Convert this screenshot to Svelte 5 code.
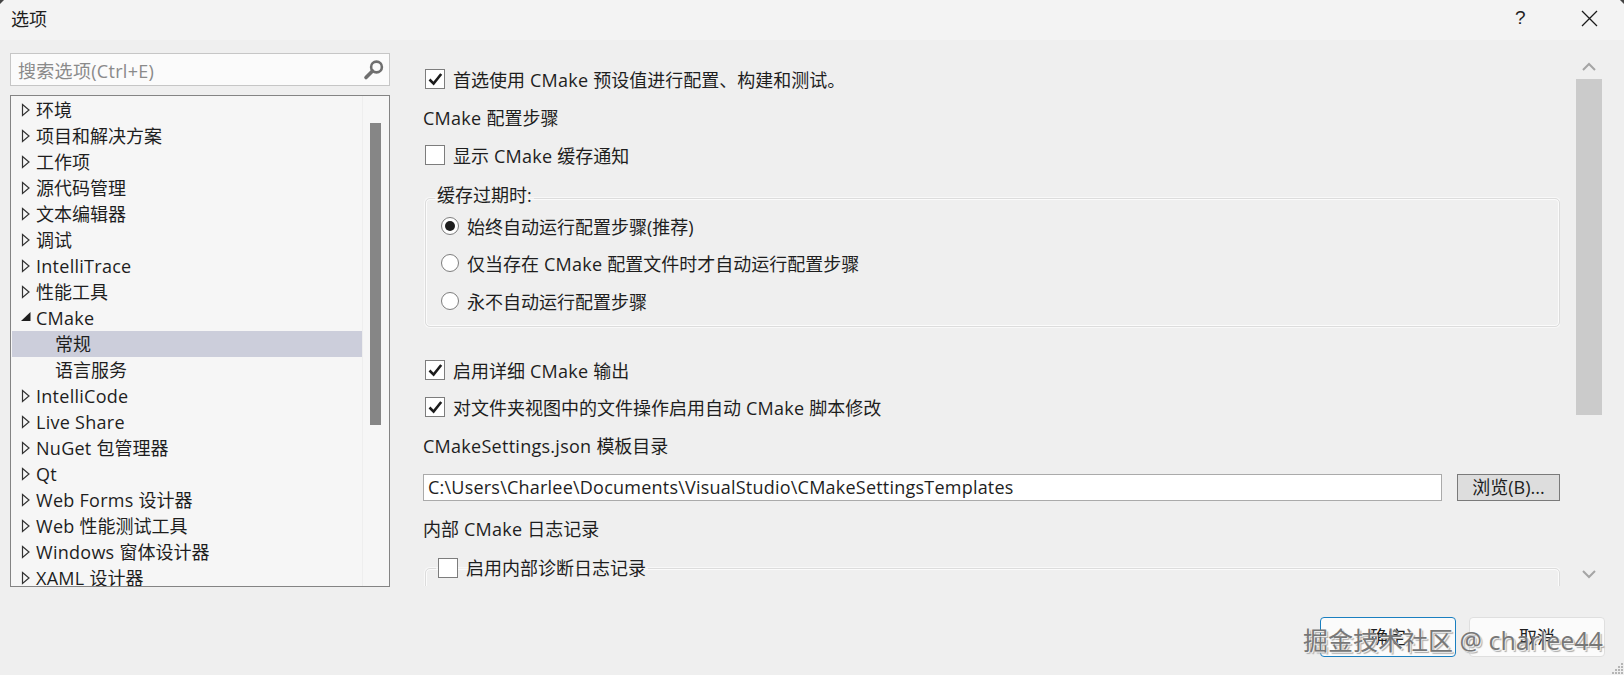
<script>
  const tree = [
    { t: '环境' }, { t: '项目和解决方案' }, { t: '工作项' }, { t: '源代码管理' }, { t: '文本编辑器' }, { t: '调试' },
    { t: 'IntelliTrace' }, { t: '性能工具' }, { t: 'CMake', open: true }, { t: '常规', child: true, sel: true }, { t: '语言服务', child: true },
    { t: 'IntelliCode' }, { t: 'Live Share' }, { t: 'NuGet 包管理器' }, { t: 'Qt' }, { t: 'Web Forms 设计器' }, { t: 'Web 性能测试工具' },
    { t: 'Windows 窗体设计器' }, { t: 'XAML 设计器' }
  ];
  const radios = [
    { t: '始终自动运行配置步骤(推荐)', on: true },
    { t: '仅当存在 CMake 配置文件时才自动运行配置步骤' },
    { t: '永不自动运行配置步骤' }
  ];
  const parts = (s) => s.split(/([A-Za-z:\\. ]{2,})/).filter(Boolean);
</script>

{#snippet txt(s)}
  <span>{#each parts(s) as p}{#if /[A-Za-z]/.test(p)}<span class="lat">{p}</span>{:else}{p}{/if}{/each}</span>
{/snippet}

{#snippet check(on)}
  <span class="box">
    {#if on}
      <svg width="15" height="14" viewBox="0 0 15 14"><path d="M1.5 7.5 L5.6 11.6 L13.2 2" fill="none" stroke="#1c1c1c" stroke-width="2.6"/></svg>
    {/if}
  </span>
{/snippet}

<div class="win">
  <header class="title">
    <span class="name">选项</span>
    <span class="help">?</span>
    <svg class="close" width="17" height="17" viewBox="0 0 17 17"><path d="M1 1 L16 16 M16 1 L1 16" stroke="#1a1a1a" stroke-width="1.3" fill="none"/></svg>
  </header>
  <div class="main">
    <aside class="left">
      <div class="search">
        <span class="ph">搜索选项(Ctrl+E)</span>
        <svg width="22" height="22" viewBox="0 0 22 22"><circle cx="13.5" cy="8" r="5.4" fill="none" stroke="#6f6f6f" stroke-width="2.6"/><path d="M9.5 12 L3 18.5" stroke="#6f6f6f" stroke-width="3.6" stroke-linecap="round"/></svg>
      </div>
      <div class="tree">
        <div class="rows">
          {#each tree as n}
            <div class="row" class:sel={n.sel} class:child={n.child}>
              {#if n.open}
                <svg class="arr" width="10" height="12" viewBox="0 0 10 12"><path d="M0 10 H9.5 V1 Z" fill="#1e1e1e"/></svg>
              {:else if !n.child}
                <svg class="arr" width="10" height="14" viewBox="0 0 10 14"><path d="M1.5 1.5 L8 7 L1.5 12.5 Z" fill="none" stroke="#333" stroke-width="1.2"/></svg>
              {/if}
              {@render txt(n.t)}
            </div>
          {/each}
        </div>
        <div class="tscroll"><div class="tthumb"></div></div>
      </div>
    </aside>
    <section class="right">
      <div class="page">
        <label class="ck first">{@render check(true)}{@render txt('首选使用 CMake 预设值进行配置、构建和测试。')}</label>
        <div class="head h1">{@render txt('CMake 配置步骤')}</div>
        <label class="ck c2">{@render check(false)}{@render txt('显示 CMake 缓存通知')}</label>
        <fieldset class="grp g1">
          <legend>缓存过期时:</legend>
          {#each radios as r}
            <div class="radio"><span class="dot" class:on={r.on}></span>{@render txt(r.t)}</div>
          {/each}
        </fieldset>
        <label class="ck c3">{@render check(true)}{@render txt('启用详细 CMake 输出')}</label>
        <label class="ck c4">{@render check(true)}{@render txt('对文件夹视图中的文件操作启用自动 CMake 脚本修改')}</label>
        <div class="head h2">{@render txt('CMakeSettings.json 模板目录')}</div>
        <div class="pathrow">
          <div class="path">C:\Users\Charlee\Documents\VisualStudio\CMakeSettingsTemplates</div>
          <div class="browse">浏览(B)...</div>
        </div>
        <div class="head h3">{@render txt('内部 CMake 日志记录')}</div>
        <fieldset class="grp g2">
          <legend class="lg2"><span class="ck inner">{@render check(false)}<span>启用内部诊断日志记录</span></span></legend>
        </fieldset>
      </div>
      <div class="vscroll">
        <svg width="16" height="10" viewBox="0 0 16 10"><path d="M2 8 L8 2 L14 8" fill="none" stroke="#a5a5a5" stroke-width="2"/></svg>
        <div class="vthumb"></div>
        <div class="spacer"></div>
        <svg width="16" height="10" viewBox="0 0 16 10"><path d="M2 2 L8 8 L14 2" fill="none" stroke="#a5a5a5" stroke-width="2"/></svg>
      </div>
    </section>
  </div>
  <footer class="foot">
    <div class="btn ok">确定</div>
    <div class="btn">取消</div>
  </footer>
  <div class="mark">掘金技术社区 @ charlee44</div>
  <svg class="grip" width="14" height="14" viewBox="0 0 14 14"><path d="M11 2h2v2h-2zM8 5h2v2H8zM11 5h2v2h-2zM5 8h2v2H5zM8 8h2v2H8zM11 8h2v2h-2zM2 11h2v2H2zM5 11h2v2H5zM8 11h2v2H8zM11 11h2v2h-2z" fill="#b5b5b5"/></svg>
  <svg class="corner tl" width="5" height="5" viewBox="0 0 5 5"><path d="M0 0H4L0 4Z" fill="#444"/></svg>
  <svg class="corner tr" width="5" height="5" viewBox="0 0 5 5"><path d="M1 0H5V4Z" fill="#444"/></svg>
</div>

<style>
  :global(body) { margin: 0; background: #efefef; }
  .win {
    position: relative; width: 1624px; height: 675px; background: #efefef; overflow: hidden;
    font-family: "Open Sans", "Noto Sans CJK SC", sans-serif; font-size: 18px; color: #1e1e1e;
    display: flex; flex-direction: column;
  }
  .lat { letter-spacing: .27px; }
  .title { height: 40px; background: #f3f3f3; display: flex; align-items: center; padding: 0 0 4px 11px; box-sizing: border-box; flex: none; }
  .name { font-size: 18px; flex: 1; }
  .help { width: 20px; font-size: 19px; margin-right: 46px; font-family: "Liberation Sans", sans-serif; color: #222; }
  .close { margin-right: 26px; }
  .main { display: flex; height: 546px; flex: none; }
  .left { width: 380px; margin-left: 10px; padding-top: 13px; flex: none; }
  .search {
    height: 33px; box-sizing: border-box; border: 1px solid #c6c6c6; background: #fbfbfb; display: flex; align-items: center;
    justify-content: space-between; padding: 0 4px 0 7px; color: #8a8a8a;
  }
  .ph { letter-spacing: .3px; }
  .tree {
    margin-top: 9px; height: 492px; box-sizing: border-box; border: 1px solid #848484; background: #f6f6f6;
    display: flex; overflow: hidden;
  }
  .rows { width: 350px; padding: 1px 0 0 1px; flex: none; height: 490px; overflow: hidden; border-right: 1px solid #eeeeee; }
  .row { height: 26px; line-height: 26px; display: flex; align-items: center; position: relative; padding-left: 24px; white-space: nowrap; }
  .row .arr { position: absolute; left: 9px; top: 6px; }
  .row.child { padding-left: 43px; }
  .row.sel { background: #cccedb; }
  .tscroll { flex: 1; padding: 27px 0 0 7px; }
  .tthumb { width: 11px; height: 302px; background: #868686; }
  .right { flex: 1; display: flex; padding-left: 33px; min-width: 0; }
  .page { width: 1137px; height: 546px; overflow: hidden; flex: none; }
  .ck { display: flex; align-items: center; gap: 8px; margin-left: 2px; height: 24px; }
  .box { width: 20px; height: 20px; box-sizing: border-box; border: 1px solid #7d7d7d; background: #fff; display: flex; align-items: center; justify-content: center; flex: none; }
  .first { margin-top: 27px; }
  .head { height: 24px; line-height: 24px; }
  .h1 { margin-top: 15px; }
  .c2 { margin-top: 13px; }
  .grp { margin: 0; border: 1px solid #dcdcdc; box-shadow: inset 0 0 0 1px #fbfbfb, 0 0 0 1px #f8f8f8; border-radius: 5px; padding: 0; box-sizing: border-box; margin-left: 2px; width: 1135px; min-width: 0; }
  .g1 { margin-top: 20px; height: 140px; padding: 0 0 0 15px; }
  .grp legend { padding: 0 2px; margin: 0 0 -2px -6px; line-height: 22px; font-size: 18px; position: relative; top: -3px; }
  .grp .lg2 { margin: 0 0 0 10px; top: 0; }
  .radio { display: flex; align-items: center; height: 37.5px; gap: 8px; }
  .dot { width: 18px; height: 18px; box-sizing: border-box; border: 1px solid #7d7d7d; border-radius: 50%; background: #fff; display: flex; align-items: center; justify-content: center; flex: none; }
  .dot.on::after { content: ""; width: 10px; height: 10px; border-radius: 50%; background: #1e1e1e; }
  .c3 { margin-top: 31px; }
  .c4 { margin-top: 13px; }
  .h2 { margin-top: 15px; }
  .pathrow { margin-top: 16px; display: flex; gap: 15px; }
  .path { width: 1019px; height: 27px; line-height: 25px; box-sizing: border-box; border: 1px solid #aaa; background: #fff; padding-left: 4px; letter-spacing: .22px; }
  .browse { width: 103px; height: 27px; line-height: 25px; box-sizing: border-box; border: 1px solid #7a7a7a; background: #dddddd; text-align: center; }
  .h3 { margin-top: 16px; }
  .g2 { margin-top: 15px; height: 80px; }
  .inner { margin: 0; }
  .vscroll { width: 26px; margin-left: 16px; display: flex; flex-direction: column; align-items: center; padding-top: 22px; height: 546px; box-sizing: border-box; }
  .vthumb { width: 26px; height: 336px; background: #cbcbcb; margin-top: 7px; }
  .spacer { height: 154px; }
  .foot { flex: 1; display: flex; justify-content: flex-end; gap: 13px; padding: 31px 19px 0 0; box-sizing: border-box; }
  .btn { width: 136px; height: 40px; line-height: 38px; box-sizing: border-box; text-align: center; border: 1px solid #dfdfdf; border-radius: 4px; background: #fbfbfb; }
  .btn.ok { border-color: #1a7fc0; }
  .mark {
    position: absolute; left: 1303px; top: 622px; font-size: 25px; line-height: 36px; white-space: nowrap; color: #777;
    text-shadow: 1px 1px 0 #eee, 2px 2px 1px #aaa; font-family: "Open Sans", "Noto Sans CJK SC", sans-serif;
  }
  .grip { position: absolute; right: 0; bottom: 0; }
  .corner { position: absolute; top: 0; }
  .tl { left: 0; }
  .tr { right: 0; }
</style>
